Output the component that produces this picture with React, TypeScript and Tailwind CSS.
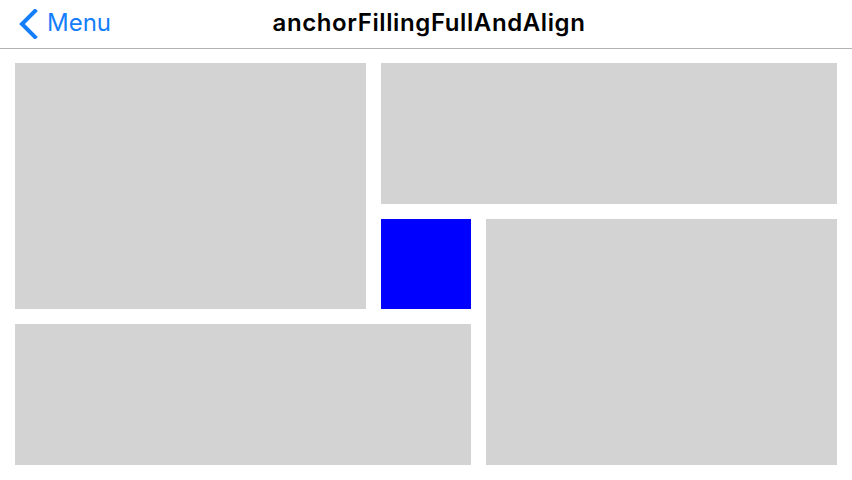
export default function App() {
  return (
    <div className="w-[852px] h-[480px] bg-white overflow-hidden" style={{ fontFamily: 'Inter, "Liberation Sans", sans-serif' }}>
      {/* Nav bar */}
      <div className="relative h-[49px] border-b border-[#b2b2b2] flex items-center">
        <div className="absolute left-0 top-0 h-[48px] flex items-center pl-[18px] pb-[3px] text-[#157efb]">
          <svg width="20" height="30" viewBox="0 0 20 30" className="mr-[9px] mt-[2px]">
            <path d="M17 2 L4 15 L17 28" fill="none" stroke="#157efb" strokeWidth="4" strokeLinecap="square" />
          </svg>
          <span className="text-[24px] leading-none">Menu</span>
        </div>
        <div className="w-full h-[48px] flex items-center justify-center pb-[3px] pl-[6px]">
          <span className="text-[24px] font-semibold leading-none text-black tracking-[0.6px]">anchorFillingFullAndAlign</span>
        </div>
      </div>

      {/* Panels */}
      <div className="px-[15px] pt-[14px] grid grid-cols-[351px_90px_351px] grid-rows-[141px_90px_141px] gap-[15px]">
        <div className="col-start-1 row-start-1 row-span-2 bg-[#d3d3d3]" />
        <div className="col-start-2 col-span-2 row-start-1 bg-[#d3d3d3]" />
        <div className="col-start-2 row-start-2 bg-[#0000ff]" />
        <div className="col-start-3 row-start-2 row-span-2 bg-[#d3d3d3]" />
        <div className="col-start-1 col-span-2 row-start-3 bg-[#d3d3d3]" />
      </div>
    </div>
  );
}
